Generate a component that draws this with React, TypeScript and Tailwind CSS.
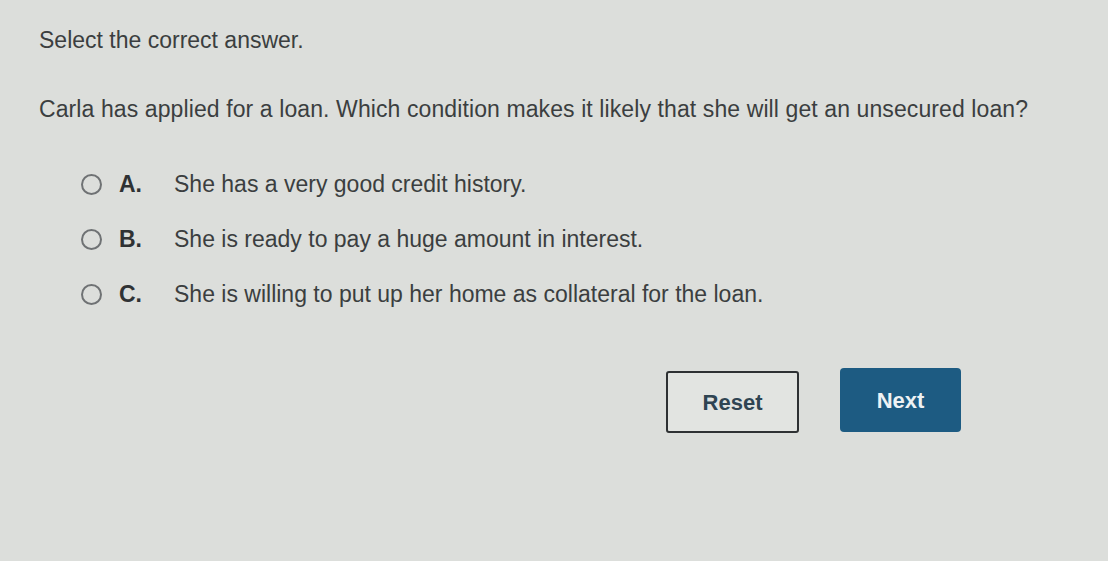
import React from 'react';

const options = [
  { letter: 'A.', text: 'She has a very good credit history.' },
  { letter: 'B.', text: 'She is ready to pay a huge amount in interest.' },
  { letter: 'C.', text: 'She is willing to put up her home as collateral for the loan.' },
];

const App: React.FC = () => {
  return (
    <div
      className="w-full h-[561px] bg-[#dcdedb] text-[#3b3e40] pl-[39px] pt-[26px]"
      style={{ fontFamily: '"Liberation Sans", Arial, sans-serif' }}
    >
      <p className="text-[23px] leading-[28px]">Select the correct answer.</p>
      <p className="mt-[41px] text-[23px] leading-[28px] tracking-[0.1px]">
        Carla has applied for a loan. Which condition makes it likely that she will get an unsecured loan?
      </p>
      <div className="mt-[47px] flex flex-col gap-[27px] pl-[42px]">
        {options.map((o) => (
          <div key={o.letter} className="flex items-center h-[28px]">
            <span className="w-[21px] h-[21px] rounded-full border-2 border-[#6f7274] shrink-0" />
            <span className="ml-[17px] w-[55px] text-[23px] font-bold text-[#2f3234]">{o.letter}</span>
            <span className="text-[23px]">{o.text}</span>
          </div>
        ))}
      </div>
      <div className="mt-[60px] ml-[627px] flex items-start gap-[41px]">
        <button className="mt-[3px] w-[133px] h-[62px] border-2 border-[#2e3133] rounded-[3px] bg-[#e2e4e1] text-[22px] font-bold text-[#2f4452]">
          Reset
        </button>
        <button className="w-[121px] h-[64px] rounded-[4px] bg-[#1d5b82] text-[22px] font-bold text-[#eef2f4]">
          Next
        </button>
      </div>
    </div>
  );
};

export default App;
